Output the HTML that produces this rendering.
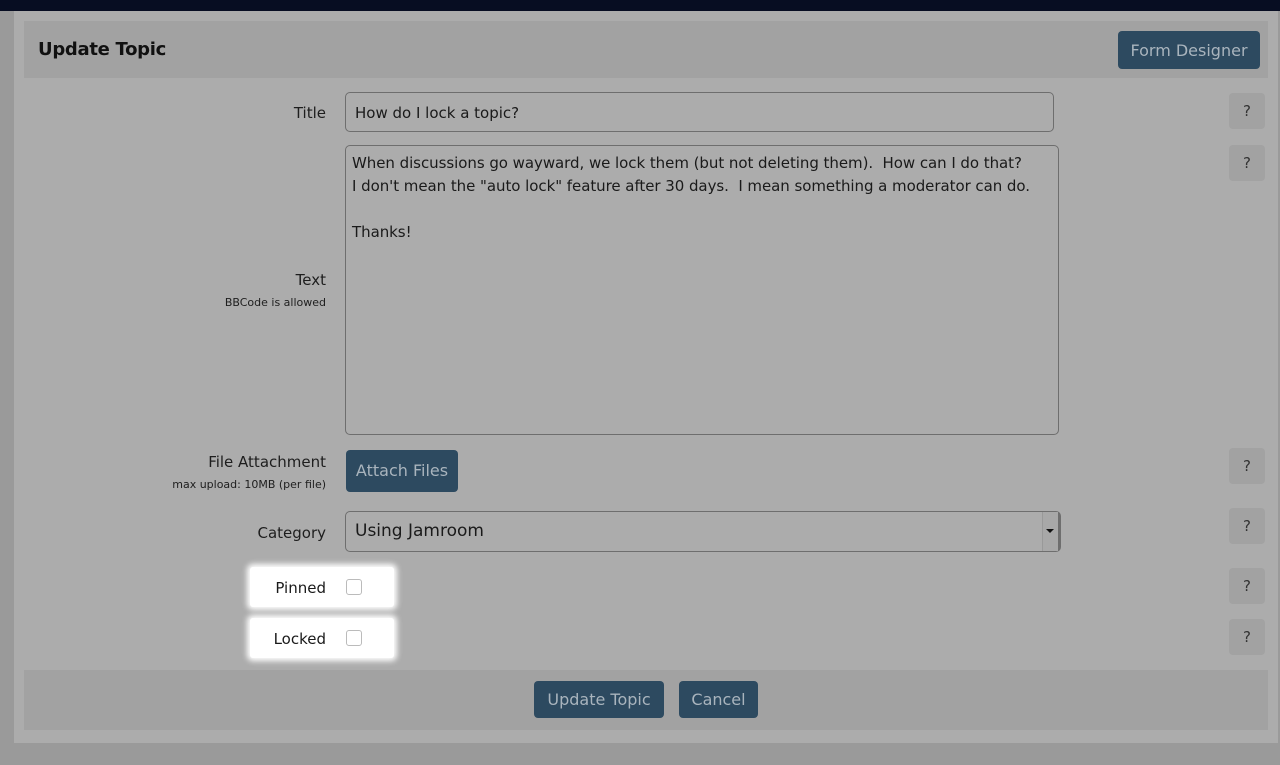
<!DOCTYPE html>
<html><head><style>
*{box-sizing:border-box}
body{margin:0;width:1280px;height:765px;background:#9a9a9a;font-family:"DejaVu Sans","Liberation Sans",sans-serif;position:relative;overflow:hidden;color:#1a1a1a}
.top{position:absolute;left:0;top:0;width:1280px;height:11px;background:#070d22}
.panel{position:absolute;left:14px;top:11px;width:1264px;height:732px;background:#acacac}
.hdr{position:absolute;left:24px;top:21px;width:1244px;height:57px;background:#a2a2a2}
.hdr h1{position:absolute;left:14px;top:18px;margin:0;font-size:18px;font-weight:bold;color:#111;letter-spacing:-0.3px}
.btn{position:absolute;background:#2d4a60;color:#a9b4bd;border-radius:4px;font-size:16px;text-align:center}
.lbl{position:absolute;right:954px;font-size:15px;text-align:right;color:#1e1e1e}
.sub{position:absolute;right:954px;font-size:11px;text-align:right;color:#1e1e1e}
.inp{position:absolute;border:1px solid #6e6e6e;border-radius:5px;background:#acacac;font-size:15px;color:#1a1a1a}
.q{position:absolute;left:1229px;width:36px;height:36px;background:#a2a2a2;border-radius:4px;text-align:center;line-height:36px;font-size:15px;color:#333}
.hl{position:absolute;left:250px;width:144px;height:40px;background:#fff;box-shadow:0 0 6px 3px #fff;border-radius:3px}
.hl span{position:absolute;right:68px;top:12px;font-size:15px}
.cb{position:absolute;left:96px;top:12px;width:16px;height:16px;border:1px solid #bbb;border-radius:3px;background:#fff}
.ftr{position:absolute;left:24px;top:670px;width:1244px;height:60px;background:#a2a2a2}
</style></head><body>
<div class="top"></div>
<div class="panel"></div>
<div class="hdr"><h1>Update Topic</h1></div>
<div class="btn" style="left:1118px;top:31px;width:142px;height:38px;line-height:39px">Form Designer</div>

<div class="lbl" style="top:104px">Title</div>
<div class="inp" style="left:345px;top:92px;width:709px;height:40px;padding:11px 9px">How do I lock a topic?</div>
<div class="q" style="top:93px">?</div>

<div class="lbl" style="top:271px">Text</div>
<div class="sub" style="top:296px">BBCode is allowed</div>
<div class="inp" style="left:345px;top:145px;width:714px;height:290px;padding:6px 6px;line-height:23px;letter-spacing:-0.05px">When discussions go wayward, we lock them (but not deleting them).&nbsp; How can I do that?<br>I don't mean the "auto lock" feature after 30 days.&nbsp; I mean something a moderator can do.<br><br>Thanks!</div>
<div class="q" style="top:145px">?</div>

<div class="lbl" style="top:453px">File Attachment</div>
<div class="sub" style="top:478px">max upload: 10MB (per file)</div>
<div class="btn" style="left:346px;top:450px;width:112px;height:42px;line-height:42px">Attach Files</div>
<div class="q" style="top:448px">?</div>

<div class="lbl" style="top:524px">Category</div>
<div class="inp" style="left:345px;top:511px;width:716px;height:41px;padding:9px 9px;font-size:17px;border-right:3px solid #6e6e6e">Using Jamroom<div style="position:absolute;right:0;top:0;width:16px;height:39px;background:#a8a8a8;border-left:1px solid #999"></div><div style="position:absolute;right:4px;top:17px;border:4px solid transparent;border-top:4px solid #111;border-bottom:0"></div></div>
<div class="q" style="top:508px">?</div>

<div class="hl" style="top:567px"><span>Pinned</span><div class="cb"></div></div>
<div class="q" style="top:568px">?</div>
<div class="hl" style="top:618px"><span>Locked</span><div class="cb"></div></div>
<div class="q" style="top:619px">?</div>

<div class="ftr"></div>
<div class="btn" style="left:534px;top:681px;width:130px;height:37px;line-height:38px">Update Topic</div>
<div class="btn" style="left:679px;top:681px;width:79px;height:37px;line-height:38px">Cancel</div>
</body></html>
